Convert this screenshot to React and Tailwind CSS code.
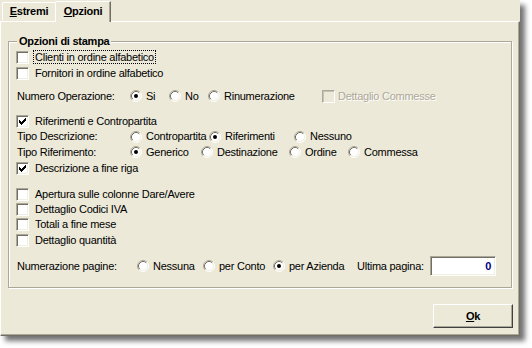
import React from "react";

function Check({ checked, disabled }) {
  return (
    <span
      className={
        disabled
          ? "relative block w-[13px] h-[13px] shrink-0 border border-t-[#ACA899] border-l-[#ACA899] border-r-white border-b-white shadow-[inset_1px_1px_0_#C7C3B2] bg-[#ECE9D8]"
          : "relative block w-[13px] h-[13px] shrink-0 border border-t-[#ACA899] border-l-[#ACA899] border-r-white border-b-white shadow-[inset_1px_1px_0_#716F64,inset_-1px_-1px_0_#F1EFE2] bg-white"
      }
    >
      {checked && (
        <svg className="absolute left-0 top-0" width="11" height="11" viewBox="0 0 11 11" shapeRendering="crispEdges">
          <rect x="2" y="4" width="1" height="3" fill="#000" />
          <rect x="3" y="5" width="1" height="3" fill="#000" />
          <rect x="4" y="6" width="1" height="3" fill="#000" />
          <rect x="5" y="5" width="1" height="3" fill="#000" />
          <rect x="6" y="4" width="1" height="3" fill="#000" />
          <rect x="7" y="3" width="1" height="3" fill="#000" />
          <rect x="8" y="2" width="1" height="3" fill="#000" />
        </svg>
      )}
    </span>
  );
}

function Radio({ on }) {
  return (
    <svg className="block shrink-0" width="12" height="12" viewBox="0 0 12 12">
      <circle cx="6" cy="6" r="5" fill="#fff" />
      <path d="M2.11 9.89 A5.5 5.5 0 0 1 9.89 2.11" fill="none" stroke="#ACA899" strokeWidth="1" />
      <path d="M9.89 2.11 A5.5 5.5 0 0 1 2.11 9.89" fill="none" stroke="#FFFFFF" strokeWidth="1" />
      <path d="M2.82 9.18 A4.5 4.5 0 0 1 9.18 2.82" fill="none" stroke="#716F64" strokeWidth="1" />
      <path d="M9.18 2.82 A4.5 4.5 0 0 1 2.82 9.18" fill="none" stroke="#F1EFE2" strokeWidth="1" />
      {on && <circle cx="6" cy="6" r="2" fill="#000" />}
    </svg>
  );
}

function RadioOpt({ on, label, w }) {
  return (
    <div className={"flex items-center gap-[4px] shrink-0 " + (w || "")}>
      <Radio on={on} />
      <span className="whitespace-nowrap">{label}</span>
    </div>
  );
}

function CheckRow({ checked, label, h, focus }) {
  return (
    <div className={"flex items-center gap-[4px] " + h}>
      <Check checked={checked} />
      {focus ? (
        <span className="whitespace-nowrap border border-dotted border-black px-[1px] leading-[12px]">{label}</span>
      ) : (
        <span className="whitespace-nowrap pl-[2px]">{label}</span>
      )}
    </div>
  );
}

export default function App() {
  return (
    <div className="w-[532px] h-[348px] bg-white font-['Liberation_Sans',Arial,sans-serif] text-[11px] leading-[13px] tracking-[-0.25px] text-black">
      <div className="w-[520px] h-[336px] bg-[#ECE9D8] shadow-[5px_5px_5px_rgba(0,0,0,0.55)] flex flex-col">
        {/* tabs */}
        <div className="flex items-end h-[21px] pl-[2px]">
          <div className="h-[18px] w-[54px] flex items-center justify-center font-bold border-t border-l border-white border-r border-r-[#716F64] rounded-tl-[2px] mb-[1px]">
            <span>
              <span className="underline">E</span>stremi
            </span>
          </div>
          <div className="relative z-10 h-[21px] w-[56px] -mb-[1px] bg-[#ECE9D8] flex items-start pt-[3px] justify-center font-bold border-t border-l border-white border-r border-r-[#716F64] shadow-[inset_-1px_0_0_#ACA899] rounded-tl-[2px] -ml-[1px]">
            <span>
              <span className="underline">O</span>pzioni
            </span>
          </div>
        </div>
        {/* panel */}
        <div className="flex-1 flex flex-col border-t border-l border-white border-r border-r-[#716F64] border-b border-b-[#716F64] shadow-[inset_-1px_-1px_0_#ACA899]">
          <fieldset className="mt-[12px] ml-[7px] mr-[7px] border border-[#ACA899] shadow-[inset_1px_1px_0_#fff,1px_1px_0_#fff]">
            <legend className="ml-[8px] px-[2px] font-bold leading-[14px] bg-[#ECE9D8]">Opzioni di stampa</legend>
            <div className="pt-[1px] pl-[7px] pb-[11px] flex flex-col">
              <CheckRow h="h-[16px]" label="Clienti in ordine alfabetico" focus />
              <CheckRow h="h-[16px]" label="Fornitori in ordine alfabetico" />

              <div className="flex items-center h-[16px] mt-[7px]">
                <span className="w-[114px] pl-[1px] shrink-0">Numero Operazione:</span>
                <RadioOpt on label="Si" w="w-[39px]" />
                <RadioOpt label="No" w="w-[39px]" />
                <RadioOpt label="Rinumerazione" w="w-[114px]" />
                <div className="flex items-center gap-[3px]">
                  <Check disabled />
                  <span className="text-[#ACA899] [text-shadow:1px_1px_0_#fff] whitespace-nowrap">Dettaglio Commesse</span>
                </div>
              </div>

              <div className="mt-[10px] flex flex-col">
                <CheckRow h="h-[15px]" checked label="Riferimenti e Contropartita" />
                <div className="flex items-center h-[15px]">
                  <span className="w-[114px] pl-[1px] shrink-0">Tipo Descrizione:</span>
                  <RadioOpt label="Contropartita" w="w-[79px]" />
                  <RadioOpt on label="Riferimenti" w="w-[85px]" />
                  <RadioOpt label="Nessuno" />
                </div>
                <div className="flex items-center h-[16px]">
                  <span className="w-[114px] pl-[1px] shrink-0">Tipo Riferimento:</span>
                  <RadioOpt on label="Generico" w="w-[71px]" />
                  <RadioOpt label="Destinazione" w="w-[88px]" />
                  <RadioOpt label="Ordine" w="w-[59px]" />
                  <RadioOpt label="Commessa" />
                </div>
                <CheckRow h="h-[16px]" checked label="Descrizione a fine riga" />
              </div>

              <div className="mt-[11px] flex flex-col">
                <CheckRow h="h-[15px]" label="Apertura sulle colonne Dare/Avere" />
                <CheckRow h="h-[15px]" label="Dettaglio Codici IVA" />
                <CheckRow h="h-[15px]" label="Totali a fine mese" />
                <CheckRow h="h-[16px]" label="Dettaglio quantità" />
              </div>

              <div className="mt-[8px] flex items-center h-[20px]">
                <span className="w-[121px] pl-[1px] shrink-0">Numerazione pagine:</span>
                <RadioOpt label="Nessuna" w="w-[66px]" />
                <RadioOpt label="per Conto" w="w-[70px]" />
                <RadioOpt on label="per Azienda" w="w-[84px]" />
                <span className="w-[73px] shrink-0 whitespace-nowrap">Ultima pagina:</span>
                <div className="w-[66px] h-[20px] bg-white border border-t-[#ACA899] border-l-[#ACA899] border-r-white border-b-white shadow-[inset_1px_1px_0_#716F64,inset_-1px_-1px_0_#F1EFE2] flex items-center justify-end pr-[4px] font-bold text-[#000080]">
                  0
                </div>
              </div>
            </div>
          </fieldset>

          <div className="flex justify-end mr-[6px] mt-[16px]">
            <button className="w-[80px] h-[24px] bg-[#ECE9D8] border border-t-white border-l-white border-r-[#404040] border-b-[#404040] shadow-[inset_-1px_-1px_0_#ACA899] font-bold text-[11px] flex items-center justify-center">
              <span>
                <span className="underline">O</span>k
              </span>
            </button>
          </div>
        </div>
      </div>
    </div>
  );
}
